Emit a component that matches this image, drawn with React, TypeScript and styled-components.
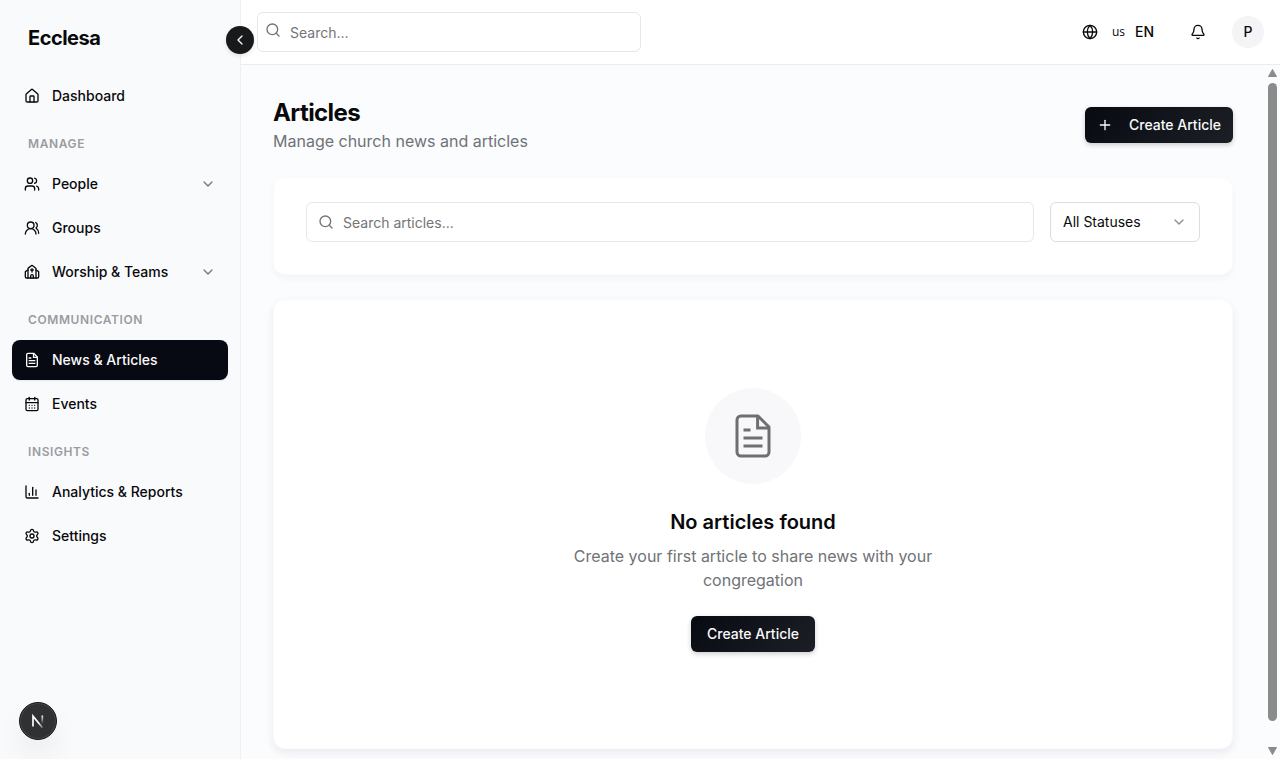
import React from "react";
import styled, { createGlobalStyle, css } from "styled-components";
import {
  Bell,
  CalendarDays,
  ChartColumn,
  ChevronDown,
  ChevronLeft,
  Church,
  Globe,
  House,
  Plus,
  Search,
  Settings,
  Users,
  UsersRound,
} from "lucide-react";

const GlobalStyle = createGlobalStyle`
  *, *::before, *::after { box-sizing: border-box; }
  body {
    margin: 0;
    background: #fbfcfe;
    color: #09090b;
    font-family: Inter, "Liberation Sans", sans-serif;
    font-size: 14px;
    line-height: 20px;
  }
  h1, h2, p, ul { margin: 0; padding: 0; }
  ul { list-style: none; }
  button, input, select { font: inherit; color: inherit; }
  button { cursor: pointer; }
  svg { display: block; flex: none; }
`;

const Shell = styled.div`
  display: flex;
  height: 100vh;
`;

const Sidebar = styled.aside`
  position: relative;
  flex: none;
  width: 241px;
  background: #f9fafc;
  border-right: 1px solid #eff0f3;
`;

const Brand = styled.div`
  padding: 24px 28px;
  font-size: 20px;
  line-height: 28px;
  font-weight: 700;
  letter-spacing: -0.025em;
`;

const CollapseButton = styled.button`
  position: absolute;
  top: 26px;
  right: -14px;
  z-index: 2;
  display: grid;
  place-items: center;
  width: 28px;
  height: 28px;
  padding: 0;
  border: 0;
  border-radius: 50%;
  background: #18191b;
  color: #fafafa;
  box-shadow: 0 2px 4px rgba(0, 0, 0, 0.1);
`;

const Nav = styled.nav`
  padding: 0 12px;
`;

const NavLabel = styled.h2`
  padding: 20px 16px 12px;
  color: #9b9ca1;
  font-size: 12px;
  line-height: 16px;
  font-weight: 600;
  letter-spacing: 0.05em;
  text-transform: uppercase;
`;

const NavList = styled.ul`
  display: grid;
  gap: 4px;
`;

const navItem = css<{ $active?: boolean }>`
  display: flex;
  align-items: center;
  gap: 12px;
  width: 100%;
  height: 40px;
  padding: 0 12px;
  border: 0;
  border-radius: 8px;
  background: ${(p) => (p.$active ? "#080a13" : "transparent")};
  color: ${(p) => (p.$active ? "#fafafa" : "#09090b")};
  box-shadow: ${(p) => (p.$active ? "0 1px 2px rgba(0, 0, 0, 0.08)" : "none")};
  font-weight: 500;
  text-align: left;
  text-decoration: none;
`;

const NavLink = styled.a<{ $active?: boolean }>`
  ${navItem}
`;

const NavToggle = styled.button<{ $active?: boolean }>`
  ${navItem}
`;

const NavText = styled.span`
  flex: 1;
`;

const Muted = styled.span`
  color: #75767a;
`;

const DevBadge = styled.button`
  position: fixed;
  left: 19px;
  bottom: 19px;
  display: grid;
  place-items: center;
  width: 38px;
  height: 38px;
  padding: 0;
  border: 1px solid #171717;
  border-radius: 50%;
  background: #303133;
  box-shadow: inset 0 0 0 1px #474747, 0 16px 32px -8px rgba(0, 0, 0, 0.16);
`;

const Column = styled.div`
  display: flex;
  flex: 1;
  flex-direction: column;
  min-width: 0;
`;

const TopBar = styled.header`
  display: flex;
  flex: none;
  align-items: center;
  justify-content: space-between;
  height: 65px;
  padding: 0 16px;
  border-bottom: 1px solid #ebecef;
  background: #ffffff;
`;

const SearchBox = styled.label<{ $wide?: boolean }>`
  position: relative;
  flex: 1;
  max-width: ${(p) => (p.$wide ? "none" : "384px")};
  color: #707276;

  svg {
    position: absolute;
    top: ${(p) => (p.$wide ? "12px" : "10px")};
    left: ${(p) => (p.$wide ? "12px" : "8px")};
  }

  input {
    display: block;
    width: 100%;
    height: 40px;
    padding: 0 12px 0 ${(p) => (p.$wide ? "36px" : "32px")};
    border: 1px solid #e6e7e9;
    border-radius: 6px;
    background: #ffffff;
    color: #09090b;
  }

  input::placeholder {
    color: #737578;
    opacity: 1;
  }
`;

const Actions = styled.div`
  display: flex;
  align-items: center;
  gap: 16px;
`;

const GhostButton = styled.button`
  display: flex;
  align-items: center;
  height: 36px;
  padding: 0 10px;
  border: 0;
  border-radius: 6px;
  background: transparent;
  font-weight: 500;
`;

const Region = styled.span`
  margin: 0 10px 0 14px;
  font-family: "Open Sans", sans-serif;
  font-size: 12px;
  font-weight: 400;
`;

const Avatar = styled.button`
  width: 32px;
  height: 32px;
  padding: 0;
  border: 0;
  border-radius: 50%;
  background: #f4f4f6;
  font-weight: 500;
`;

const Viewport = styled.div`
  display: flex;
  flex: 1;
  min-height: 0;
`;

const Main = styled.main`
  display: flex;
  flex: 1;
  flex-direction: column;
  gap: 24px;
  min-width: 0;
  padding: 32px;
  overflow-y: auto;
  scrollbar-width: none;
`;

const ScrollTrack = styled.div`
  display: flex;
  flex: none;
  flex-direction: column;
  align-items: center;
  gap: 6px;
  width: 15px;
  padding: 4px 0;
`;

const ScrollThumb = styled.div`
  flex: 1;
  width: 9px;
  margin-bottom: 20px;
  border-radius: 5px;
  background: #8b8b8b;
`;

const PageHead = styled.div`
  display: flex;
  align-items: center;
  justify-content: space-between;
`;

const PageTitle = styled.h1`
  font-size: 24px;
  line-height: 32px;
  font-weight: 700;
  letter-spacing: -0.025em;
`;

const BodyText = styled.p`
  color: #707276;
  font-size: 16px;
  line-height: 24px;
`;

const PrimaryButton = styled.button<{ $icon?: boolean }>`
  display: flex;
  align-items: center;
  gap: 16px;
  height: 36px;
  padding: ${(p) => (p.$icon ? "0 12px" : "0 16px")};
  border: 0;
  border-radius: 6px;
  background: linear-gradient(135deg, #080a12, #1c1f26);
  color: #fafafa;
  box-shadow: 0 2px 5px rgba(0, 0, 0, 0.2);
  font-weight: 500;
`;

const Card = styled.section`
  flex: none;
  padding: 24px 32px 32px;
  border: 1px solid #fafbfc;
  border-radius: 12px;
  background: #ffffff;
  box-shadow: 0 3px 6px rgba(15, 20, 35, 0.04);
`;

const Filters = styled(Card)`
  display: flex;
  gap: 16px;
`;

const SelectBox = styled.div`
  position: relative;
  width: 150px;

  select {
    width: 100%;
    height: 40px;
    padding: 0 32px 0 12px;
    border: 1px solid #dcdde0;
    border-radius: 6px;
    appearance: none;
    background: #ffffff;
  }

  svg {
    position: absolute;
    top: 12px;
    right: 13px;
    color: #8b8b90;
    pointer-events: none;
  }
`;

const EmptyCard = styled(Card)`
  box-shadow: 0 4px 10px rgba(15, 20, 35, 0.07);
`;

const Empty = styled.div`
  display: flex;
  flex-direction: column;
  align-items: center;
  padding: 64px 0;
  text-align: center;
`;

const EmptyIcon = styled.div`
  display: grid;
  place-items: center;
  width: 96px;
  height: 96px;
  margin-bottom: 24px;
  border-radius: 50%;
  background: #f8f8fa;
  color: #6e6e73;
`;

const EmptyTitle = styled.h2`
  margin-bottom: 8px;
  font-size: 20px;
  line-height: 28px;
  font-weight: 600;
`;

const EmptyText = styled(BodyText)`
  max-width: 384px;
  margin-bottom: 24px;
`;

function DocumentIcon({ size = 16 }: { size?: number }) {
  return (
    <svg
      width={size}
      height={size}
      viewBox="0 0 24 24"
      fill="none"
      stroke="currentColor"
      strokeWidth={size > 16 ? 1.5 : 2}
      strokeLinecap="square"
      aria-hidden="true"
    >
      <path d="M14.500 2H6a2 2 0 0 0-2 2v16a2 2 0 0 0 2 2h12a2 2 0 0 0 2-2V7.500Z" strokeLinejoin="round" />
      <path d="M14.300 2.500V8H19.500" />
      <path d="M10 9H8M16 13H8M16 17H8" />
    </svg>
  );
}

function NextLogo() {
  return (
    <svg width="18" height="18" viewBox="0 0 18 18" fill="none" aria-hidden="true">
      <defs>
        <linearGradient id="stem" x1="0" y1="3" x2="0" y2="12" gradientUnits="userSpaceOnUse">
          <stop stopColor="#fff" />
          <stop offset="1" stopColor="#fff" stopOpacity="0" />
        </linearGradient>
        <linearGradient id="diagonal" x1="4" y1="3" x2="14" y2="16" gradientUnits="userSpaceOnUse">
          <stop offset="0.6" stopColor="#fff" />
          <stop offset="1" stopColor="#fff" stopOpacity="0.2" />
        </linearGradient>
      </defs>
      <path d="M4 14.500V4.200L13.500 15.800" stroke="url(#diagonal)" strokeWidth="1.700" />
      <path d="M13.300 3.500V12.500" stroke="url(#stem)" strokeWidth="1.700" />
    </svg>
  );
}

type Item = { label: string; icon: React.ReactNode; active?: boolean; expandable?: boolean };

const groups: { title?: string; items: Item[] }[] = [
  { items: [{ label: "Dashboard", icon: <House size={16} /> }] },
  {
    title: "Manage",
    items: [
      { label: "People", icon: <Users size={16} />, expandable: true },
      { label: "Groups", icon: <UsersRound size={16} /> },
      { label: "Worship & Teams", icon: <Church size={16} />, expandable: true },
    ],
  },
  {
    title: "Communication",
    items: [
      { label: "News & Articles", icon: <DocumentIcon />, active: true },
      { label: "Events", icon: <CalendarDays size={16} /> },
    ],
  },
  {
    title: "Insights",
    items: [
      { label: "Analytics & Reports", icon: <ChartColumn size={16} /> },
      { label: "Settings", icon: <Settings size={16} /> },
    ],
  },
];

function NavEntry({ item }: { item: Item }) {
  if (item.expandable) {
    return (
      <NavToggle type="button" aria-expanded={false}>
        {item.icon}
        <NavText>{item.label}</NavText>
        <Muted>
          <ChevronDown size={16} />
        </Muted>
      </NavToggle>
    );
  }
  return (
    <NavLink href="#" $active={item.active} aria-current={item.active ? "page" : undefined}>
      {item.icon}
      <NavText>{item.label}</NavText>
    </NavLink>
  );
}

export default function App() {
  return (
    <>
      <GlobalStyle />
      <Shell>
        <Sidebar>
          <Brand>Ecclesa</Brand>
          <CollapseButton type="button" aria-label="Collapse sidebar">
            <ChevronLeft size={16} />
          </CollapseButton>
          <Nav>
            {groups.map((group) => (
              <React.Fragment key={group.title ?? "top"}>
                {group.title && <NavLabel>{group.title}</NavLabel>}
                <NavList>
                  {group.items.map((item) => (
                    <li key={item.label}>
                      <NavEntry item={item} />
                    </li>
                  ))}
                </NavList>
              </React.Fragment>
            ))}
          </Nav>
        </Sidebar>
        <Column>
          <TopBar>
            <SearchBox>
              <Search size={16} />
              <input type="search" placeholder="Search..." aria-label="Search" />
            </SearchBox>
            <Actions>
              <GhostButton type="button">
                <Globe size={16} />
                <Region>us</Region>
                EN
              </GhostButton>
              <GhostButton type="button" aria-label="Notifications">
                <Bell size={16} />
              </GhostButton>
              <Avatar type="button">P</Avatar>
            </Actions>
          </TopBar>
          <Viewport>
            <Main>
              <PageHead>
                <div>
                  <PageTitle>Articles</PageTitle>
                  <BodyText>Manage church news and articles</BodyText>
                </div>
                <PrimaryButton type="button" $icon>
                  <Plus size={16} />
                  Create Article
                </PrimaryButton>
              </PageHead>
              <Filters>
                <SearchBox $wide>
                  <Search size={16} />
                  <input type="search" placeholder="Search articles..." aria-label="Search articles" />
                </SearchBox>
                <SelectBox>
                  <select aria-label="Status" defaultValue="all">
                    <option value="all">All Statuses</option>
                  </select>
                  <ChevronDown size={16} />
                </SelectBox>
              </Filters>
              <EmptyCard>
                <Empty>
                  <EmptyIcon>
                    <DocumentIcon size={48} />
                  </EmptyIcon>
                  <EmptyTitle>No articles found</EmptyTitle>
                  <EmptyText>Create your first article to share news with your congregation</EmptyText>
                  <PrimaryButton type="button">Create Article</PrimaryButton>
                </Empty>
              </EmptyCard>
            </Main>
            <ScrollTrack aria-hidden="true">
              <svg width="9" height="8" viewBox="0 0 9 8">
                <path d="M4.500 0.500L8.500 7.500H0.500Z" fill="#8b8b8b" stroke="#8b8b8b" strokeLinejoin="round" />
              </svg>
              <ScrollThumb />
              <svg width="9" height="8" viewBox="0 0 9 8">
                <path d="M4.500 7.500L8.500 0.500H0.500Z" fill="#8b8b8b" stroke="#8b8b8b" strokeLinejoin="round" />
              </svg>
            </ScrollTrack>
          </Viewport>
        </Column>
        <DevBadge type="button" aria-label="Open developer tools">
          <NextLogo />
        </DevBadge>
      </Shell>
    </>
  );
}
